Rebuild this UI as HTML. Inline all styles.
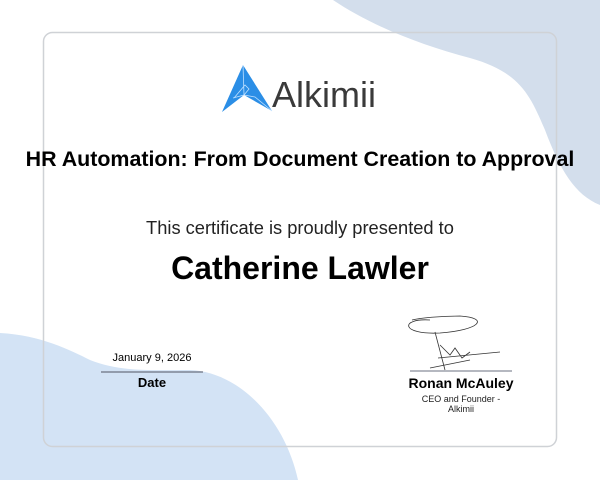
<!DOCTYPE html>
<html><head><style>
body{margin:0;width:600px;height:480px;overflow:hidden;background:#fff;font-family:"Liberation Sans",sans-serif;position:relative}
.a{position:absolute;left:0;right:0;text-align:center;color:#000;white-space:nowrap}
</style></head><body>
<svg width="600" height="480" style="position:absolute;left:0;top:0">
<path d="M333 0 C370 25 420 45 470 58 C520 72 530 95 545 130 C560 170 575 195 600 205 L600 0 Z" fill="#d3deec"/>
<path d="M0 333 C40 335 70 350 90 360 C120 372 150 370 190 370 C240 372 285 420 298 480 L0 480 Z" fill="#d3e3f5"/>
<rect x="43.5" y="32.5" width="513" height="414" rx="9" fill="none" stroke="#cfd2d6" stroke-width="1.5"/>
<g transform="translate(222,65)">
<path d="M21 0 L0 47 L22 30 L50 46 Z" fill="#2b8ee6"/>
<path d="M21 0 L22 30 M11 33 L22 30 L27 24 L23 20 L12 33 M22 30 L33 32 L50 46" stroke="#bfe0ff" stroke-width="0.8" fill="none"/>
</g>
<text x="272" y="107" font-family="Liberation Sans" font-size="36" fill="#3a3a3a">Alkimii</text>
<path d="M430 320 C400 318 400 335 440 333 C480 330 490 318 460 316 C440 316 420 318 412 320 M435 332 L445 370 M440 345 L450 355 L455 348 L462 358 L470 352 M438 358 L500 352 M430 368 L470 360" stroke="#333" stroke-width="0.8" fill="none"/>
<line x1="101" y1="372" x2="203" y2="372" stroke="#6b7280" stroke-width="1.2"/>
<line x1="410" y1="371" x2="512" y2="371" stroke="#6b7280" stroke-width="1"/>
</svg>
<div class="a" style="top:147px;font-size:21.4px;font-weight:bold">HR Automation: From Document Creation to Approval</div>
<div class="a" style="top:217px;font-size:18.3px;color:#222">This certificate is proudly presented to</div>
<div class="a" style="top:250px;font-size:32px;font-weight:bold">Catherine Lawler</div>
<div style="position:absolute;left:101px;width:102px;top:352px;text-align:center;font-size:11px">January 9, 2026</div>
<div style="position:absolute;left:101px;width:102px;top:375px;text-align:center;font-size:13px;font-weight:bold">Date</div>
<div style="position:absolute;left:391px;width:140px;top:375px;text-align:center;font-size:14px;font-weight:bold">Ronan McAuley</div>
<div style="position:absolute;left:401px;width:120px;top:395px;text-align:center;font-size:9px;line-height:9.5px;color:#222">CEO and Founder -<br>Alkimii</div>
</body></html>
